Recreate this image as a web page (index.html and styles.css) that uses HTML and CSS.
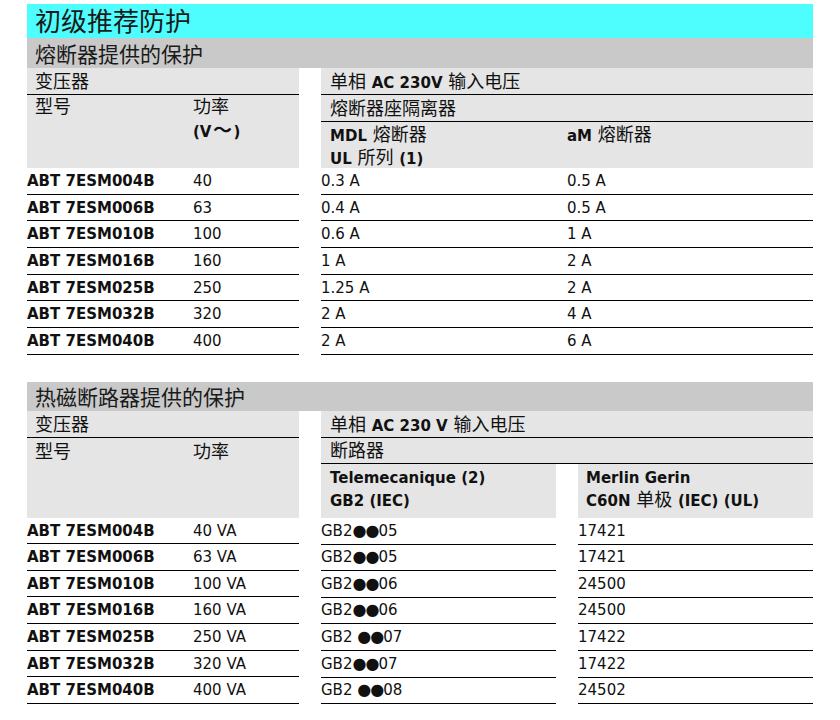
FILE: index.html
```html
<!DOCTYPE html>
<html lang="zh-CN">
<head>
<meta charset="utf-8">
<title>初级推荐防护</title>
<link rel="stylesheet" href="styles.css">
</head>
<body>
<div class="page">
  <h1 class="title">初级推荐防护</h1>

  <section class="sec">
    <h2 class="band">熔断器提供的保护</h2>
    <div class="tables">
      <div class="tbl left">
        <div class="hd">
          <div class="hr rule">变压器</div>
          <div class="hr cols tall1">
            <div class="h1">型号</div>
            <div class="h2">功率<br><b>(V<span class="wave">～</span>)</b></div>
          </div>
        </div>
        <div class="dr"><span class="code">ABT 7ESM004B</span><span>40</span></div>
        <div class="dr"><span class="code">ABT 7ESM006B</span><span>63</span></div>
        <div class="dr"><span class="code">ABT 7ESM010B</span><span>100</span></div>
        <div class="dr"><span class="code">ABT 7ESM016B</span><span>160</span></div>
        <div class="dr"><span class="code">ABT 7ESM025B</span><span>250</span></div>
        <div class="dr"><span class="code">ABT 7ESM032B</span><span>320</span></div>
        <div class="dr"><span class="code">ABT 7ESM040B</span><span>400</span></div>
      </div>

      <div class="tbl right r1">
        <div class="hd">
          <div class="hr rule pad">单相 <b>AC 230V</b> 输入电压</div>
          <div class="hr rule pad">熔断器座隔离器</div>
          <div class="hr cols tall2">
            <div class="h1"><b>MDL</b> 熔断器<br><b>UL</b> 所列 <b>(1)</b></div>
            <div class="h2"><b>aM</b> 熔断器</div>
          </div>
        </div>
        <div class="dr"><span>0.3 A</span><span>0.5 A</span></div>
        <div class="dr"><span>0.4 A</span><span>0.5 A</span></div>
        <div class="dr"><span>0.6 A</span><span>1 A</span></div>
        <div class="dr"><span>1 A</span><span>2 A</span></div>
        <div class="dr"><span>1.25 A</span><span>2 A</span></div>
        <div class="dr"><span>2 A</span><span>4 A</span></div>
        <div class="dr"><span>2 A</span><span>6 A</span></div>
      </div>
    </div>
  </section>

  <section class="sec sec2">
    <h2 class="band">热磁断路器提供的保护</h2>
    <div class="tables">
      <div class="tbl left">
        <div class="hd">
          <div class="hr rule">变压器</div>
          <div class="hr cols tall3">
            <div class="h1">型号</div>
            <div class="h2">功率</div>
          </div>
        </div>
        <div class="dr r2"><span class="code">ABT 7ESM004B</span><span>40 VA</span></div>
        <div class="dr r2"><span class="code">ABT 7ESM006B</span><span>63 VA</span></div>
        <div class="dr r2"><span class="code">ABT 7ESM010B</span><span>100 VA</span></div>
        <div class="dr r2"><span class="code">ABT 7ESM016B</span><span>160 VA</span></div>
        <div class="dr r2"><span class="code">ABT 7ESM025B</span><span>250 VA</span></div>
        <div class="dr r2"><span class="code">ABT 7ESM032B</span><span>320 VA</span></div>
        <div class="dr r2"><span class="code">ABT 7ESM040B</span><span>400 VA</span></div>
      </div>

      <div class="tbl right split">
        <div class="hd">
          <div class="hr rule pad">单相 <b>AC 230 V</b> 输入电压</div>
          <div class="hr rule pad short">断路器</div>
          <div class="hsplit">
            <div class="hb"><b>Telemecanique (2)</b><br><b>GB2 (IEC)</b></div>
            <div class="hb"><b>Merlin Gerin</b><br><b>C60N</b> 单极 <b>(IEC) (UL)</b></div>
          </div>
        </div>
        <div class="sr"><span>GB2<i class="dots">●●</i>05</span><span>17421</span></div>
        <div class="sr"><span>GB2<i class="dots">●●</i>05</span><span>17421</span></div>
        <div class="sr"><span>GB2<i class="dots">●●</i>06</span><span>24500</span></div>
        <div class="sr"><span>GB2<i class="dots">●●</i>06</span><span>24500</span></div>
        <div class="sr"><span>GB2 <i class="dots">●●</i>07</span><span>17422</span></div>
        <div class="sr"><span>GB2<i class="dots">●●</i>07</span><span>17422</span></div>
        <div class="sr"><span>GB2 <i class="dots">●●</i>08</span><span>24502</span></div>
      </div>
    </div>
  </section>
</div>
</body>
</html>
```
FILE: styles.css
```css
* { box-sizing: border-box; }

body {
  margin: 0;
  background: #ffffff;
  color: #111111;
  font-family: "DejaVu Sans", "Noto Sans CJK SC", sans-serif;
}

.page {
  width: 813px;
  padding: 4px 0 0 27px;
}

.title {
  margin: 0;
  height: 34px;
  padding: 0 0 0 8px;
  background: #4efdfd;
  font-family: "Noto Sans CJK SC", sans-serif;
  font-weight: 400;
  font-size: 26px;
  line-height: 31px;
  color: #1a1a1a;
}

.sec { margin: 0; }
.sec2 { margin-top: 27px; }

.band {
  margin: 0;
  height: 30px;
  padding-left: 8px;
  background: #c9c9c9;
  font-family: "Noto Sans CJK SC", sans-serif;
  font-weight: 400;
  font-size: 21px;
  line-height: 30px;
  color: #1a1a1a;
}
.sec2 .band { height: 29px; line-height: 29px; }

.tables {
  display: flex;
  gap: 22px;
}

.tbl.left { width: 272px; }
.tbl.right { width: 492px; }

.hd {
  background: #e5e5e5;
  font-size: 18px;
  color: #111;
}
.split .hd { background: transparent; }

.hd b {
  font-family: "DejaVu Sans", sans-serif;
  font-weight: 700;
  font-size: 15px;
}

.wave {
  font-family: "Noto Sans CJK SC", sans-serif;
  font-size: 19px;
  font-weight: 700;
  display: inline-block;
  width: 22px;
  text-align: center;
}

.hr {
  height: 27px;
  line-height: 27px;
  padding-left: 8px;
  white-space: nowrap;
}
.hr.pad { padding-left: 9px; }
.split .hr { background: #e5e5e5; }
.hr.short { height: 26px; line-height: 26px; }
.rule { border-bottom: 1px solid #000; }

.hr.cols {
  display: grid;
  line-height: 22px;
  padding-top: 1px;
}
.left .hr.cols { grid-template-columns: 158px 1fr; }
.r1 .hr.cols { grid-template-columns: 237px 1fr; padding-left: 9px; padding-top: 2px; }

.tall1 { height: 73px; }
.tall2 { height: 46px; }
.tall3 { height: 80px; padding-top: 3px !important; }

.hsplit {
  display: grid;
  grid-template-columns: 235px 235px;
  column-gap: 22px;
}
.hb {
  height: 54px;
  background: #e5e5e5;
  padding: 2px 0 0 9px;
  line-height: 22px;
  white-space: nowrap;
}
.hb + .hb { padding-left: 8px; }

.dr {
  display: grid;
  height: 26.67px;
  line-height: 26px;
  font-size: 15px;
  border-bottom: 1px solid #000;
  white-space: nowrap;
}
.dr.r2 { height: 26.6px; }
.left .dr { grid-template-columns: 166px 1fr; }
.r1 .dr { grid-template-columns: 246px 1fr; }

.code { font-weight: 700; }

.sr {
  display: grid;
  grid-template-columns: 235px 235px;
  column-gap: 22px;
  height: 26.6px;
  line-height: 26px;
  font-size: 15px;
  white-space: nowrap;
}
.sr span { border-bottom: 1px solid #000; }

.dots {
  font-style: normal;
  font-size: 16px;
  letter-spacing: -1px;
}
```
